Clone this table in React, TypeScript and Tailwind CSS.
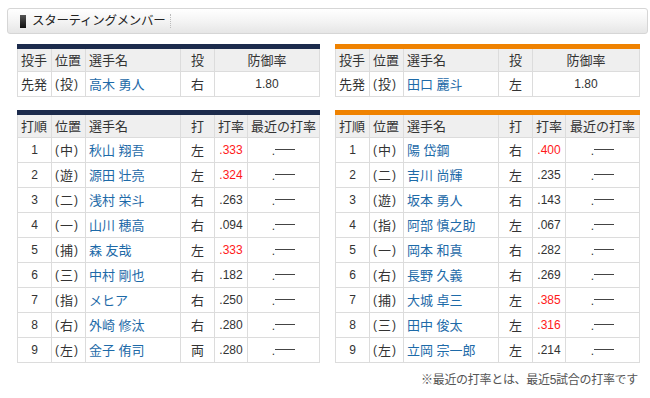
import React from 'react';

type Batter = { order: number; pos: string; name: string; hand: string; avg: string; hot?: boolean };

const homeBatters: Batter[] = [
  { order: 1, pos: '中', name: '秋山 翔吾', hand: '左', avg: '.333', hot: true },
  { order: 2, pos: '遊', name: '源田 壮亮', hand: '左', avg: '.324', hot: true },
  { order: 3, pos: '二', name: '浅村 栄斗', hand: '右', avg: '.263' },
  { order: 4, pos: '一', name: '山川 穂高', hand: '右', avg: '.094' },
  { order: 5, pos: '捕', name: '森 友哉', hand: '左', avg: '.333', hot: true },
  { order: 6, pos: '三', name: '中村 剛也', hand: '右', avg: '.182' },
  { order: 7, pos: '指', name: 'メヒア', hand: '右', avg: '.250' },
  { order: 8, pos: '右', name: '外崎 修汰', hand: '右', avg: '.280' },
  { order: 9, pos: '左', name: '金子 侑司', hand: '両', avg: '.280' },
];

const awayBatters: Batter[] = [
  { order: 1, pos: '中', name: '陽 岱鋼', hand: '右', avg: '.400', hot: true },
  { order: 2, pos: '二', name: '吉川 尚輝', hand: '左', avg: '.235' },
  { order: 3, pos: '遊', name: '坂本 勇人', hand: '右', avg: '.143' },
  { order: 4, pos: '指', name: '阿部 慎之助', hand: '左', avg: '.067' },
  { order: 5, pos: '一', name: '岡本 和真', hand: '右', avg: '.282' },
  { order: 6, pos: '右', name: '長野 久義', hand: '右', avg: '.269' },
  { order: 7, pos: '捕', name: '大城 卓三', hand: '左', avg: '.385', hot: true },
  { order: 8, pos: '三', name: '田中 俊太', hand: '左', avg: '.316', hot: true },
  { order: 9, pos: '左', name: '立岡 宗一郎', hand: '左', avg: '.214' },
];

const th = 'h-[25px] border border-[#dcdcdc] bg-[#efefef] font-normal px-[3px] py-0 whitespace-nowrap';
const td = 'h-[25px] border border-[#dcdcdc] bg-white px-[3px] py-0 whitespace-nowrap';

function Pos({ p }: { p: string }) {
  return (
    <span className="inline-flex items-center">
      <span className="text-[12px] mr-[1px]">(</span>
      {p}
      <span className="text-[12px] ml-[1px]">)</span>
    </span>
  );
}

function Dash() {
  return (
    <span className="inline-flex items-center">
      <span className="text-[12px]">.</span>
      <span className="inline-block w-[20px] h-px bg-[#444] mt-[-2px]" />
    </span>
  );
}

function PitcherTable({ bar, name, hand }: { bar: string; name: string; hand: string }) {
  return (
    <table className={`w-full border-collapse border-t-[5px] ${bar} table-fixed`}>
      <colgroup>
        <col className="w-[34px]" />
        <col className="w-[34px]" />
        <col className="w-[95px]" />
        <col className="w-[34px]" />
        <col />
      </colgroup>
      <thead>
        <tr>
          <th className={`${th} text-left`}>投手</th>
          <th className={`${th} text-left`}>位置</th>
          <th className={`${th} text-left`}>選手名</th>
          <th className={`${th} text-center`}>投</th>
          <th className={`${th} text-center`}>防御率</th>
        </tr>
      </thead>
      <tbody>
        <tr>
          <td className={td}>先発</td>
          <td className={td}>
            <Pos p="投" />
          </td>
          <td className={`${td} text-[#1d6aa8]`}>{name}</td>
          <td className={`${td} text-center`}>{hand}</td>
          <td className={`${td} text-center text-[12px]`}>1.80</td>
        </tr>
      </tbody>
    </table>
  );
}

function BatterTable({ bar, rows }: { bar: string; rows: Batter[] }) {
  return (
    <table className={`w-full border-collapse border-t-[5px] ${bar} table-fixed`}>
      <colgroup>
        <col className="w-[34px]" />
        <col className="w-[34px]" />
        <col className="w-[95px]" />
        <col className="w-[34px]" />
        <col className="w-[33px]" />
        <col />
      </colgroup>
      <thead>
        <tr>
          <th className={`${th} text-left`}>打順</th>
          <th className={`${th} text-left`}>位置</th>
          <th className={`${th} text-left`}>選手名</th>
          <th className={`${th} text-center`}>打</th>
          <th className={`${th} text-center px-0`}>打率</th>
          <th className={`${th} text-center px-0`}>最近の打率</th>
        </tr>
      </thead>
      <tbody>
        {rows.map((r) => (
          <tr key={r.order}>
            <td className={`${td} text-center text-[12px]`}>{r.order}</td>
            <td className={td}>
              <Pos p={r.pos} />
            </td>
            <td className={`${td} text-[#1d6aa8]`}>{r.name}</td>
            <td className={`${td} text-center`}>{r.hand}</td>
            <td className={`${td} text-center text-[12px] px-0 ${r.hot ? 'text-[#ff1a1a]' : ''}`}>{r.avg}</td>
            <td className={`${td} text-center`}>
              <Dash />
            </td>
          </tr>
        ))}
      </tbody>
    </table>
  );
}

export default function App() {
  return (
    <div
      className="w-[650px] h-[398px] bg-white text-[#333] text-[13px] leading-none pt-[8px] pl-[7px] pr-[2px]"
      style={{ fontFamily: '"Liberation Sans", "Noto Sans CJK JP", sans-serif' }}
    >
      <div className="h-[26px] flex items-center rounded-[3px] border border-[#d6d6d6] bg-gradient-to-b from-white via-[#f4f4f4] to-[#e6e6e6] pl-[12px]">
        <span className="w-[6px] h-[13px] bg-gradient-to-b from-[#555] to-[#111] mr-[6px]" />
        <span className="text-[12.5px] text-[#222] tracking-[-0.3px]">スターティングメンバー</span>
        <span className="ml-[5px] h-[14px] border-l border-dotted border-[#bbb]" />
      </div>

      <div className="grid grid-cols-[303px_305px] gap-x-[15px] pl-[10px] mt-[10px]">
        <PitcherTable bar="border-t-[#1c2b4c]" name="高木 勇人" hand="右" />
        <PitcherTable bar="border-t-[#ef8200]" name="田口 麗斗" hand="左" />
        <div className="col-span-2 h-[13px]" />
        <BatterTable bar="border-t-[#1c2b4c]" rows={homeBatters} />
        <BatterTable bar="border-t-[#ef8200]" rows={awayBatters} />
        <div className="col-start-2 text-right text-[12px] text-[#555] mt-[11px] pr-[2px] tracking-[-0.3px]">
          ※最近の打率とは、最近5試合の打率です
        </div>
      </div>
    </div>
  );
}
